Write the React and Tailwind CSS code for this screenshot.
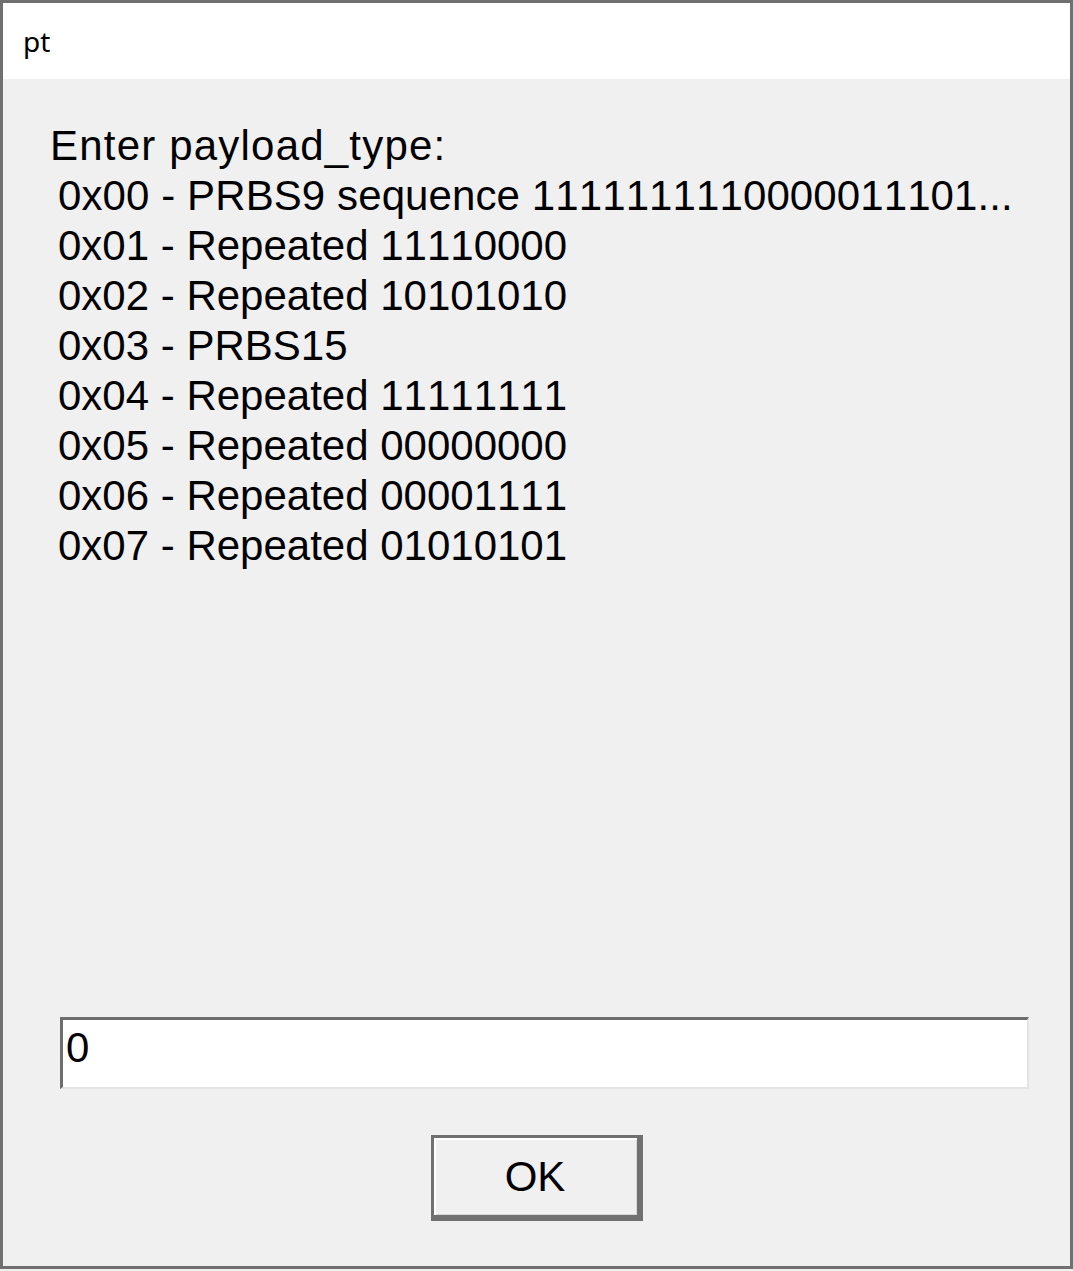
import React from "react";

const lines = [
  "0x00 - PRBS9 sequence 1111111110000011101...",
  "0x01 - Repeated 11110000",
  "0x02 - Repeated 10101010",
  "0x03 - PRBS15",
  "0x04 - Repeated 11111111",
  "0x05 - Repeated 00000000",
  "0x06 - Repeated 00001111",
  "0x07 - Repeated 01010101",
];

export default function App() {
  return (
    <div className="w-[1073px] h-[1271px] bg-[#f0f0f0]">
      <div className="w-[1073px] h-[1269px] border-[3px] border-[#707070] flex flex-col">
        <div
          className="h-[76px] bg-white flex items-center pl-[20px] text-[28px] text-black"
          style={{ fontFamily: '"Noto Sans", "Open Sans", sans-serif' }}
        >
          pt
        </div>
        <div
          className="flex-1 flex flex-col bg-[#f0f0f0] pt-[42px] pb-[45px] text-black [font-kerning:none]"
          style={{ fontFamily: '"Liberation Sans", Arial, sans-serif' }}
        >
          <div className="pl-[47px] text-[42px] leading-[50px]">
            <div className="tracking-[1.2px]">Enter payload_type:</div>
            {lines.map((l, i) => (
              <div
                key={l}
                className={i === 0 ? "pl-[8px] whitespace-pre tracking-[0.1px]" : "pl-[8px] whitespace-pre"}
              >
                {l}
              </div>
            ))}
          </div>
          <div className="flex-1" />
          <div className="ml-[57px] w-[969px] h-[72px] bg-white border-t-[3px] border-l-[3px] border-b-2 border-r-2 border-t-[#6d6d6d] border-l-[#6d6d6d] border-b-[#e3e3e3] border-r-[#e3e3e3] pl-[3px] pt-[7px] text-[42px] leading-[42px]">
            0
          </div>
          <div className="flex justify-center mt-[46px]">
            <div className="w-[212px] h-[86px] bg-[#f0f0f0] border-t-[3px] border-l-[3px] border-b-[6px] border-r-[6px] border-[#707070] shadow-[inset_2px_2px_0_#ffffff,inset_-1px_-1px_0_#d8d8d8] flex items-center justify-center text-[42px]">
              OK
            </div>
          </div>
        </div>
      </div>
    </div>
  );
}
